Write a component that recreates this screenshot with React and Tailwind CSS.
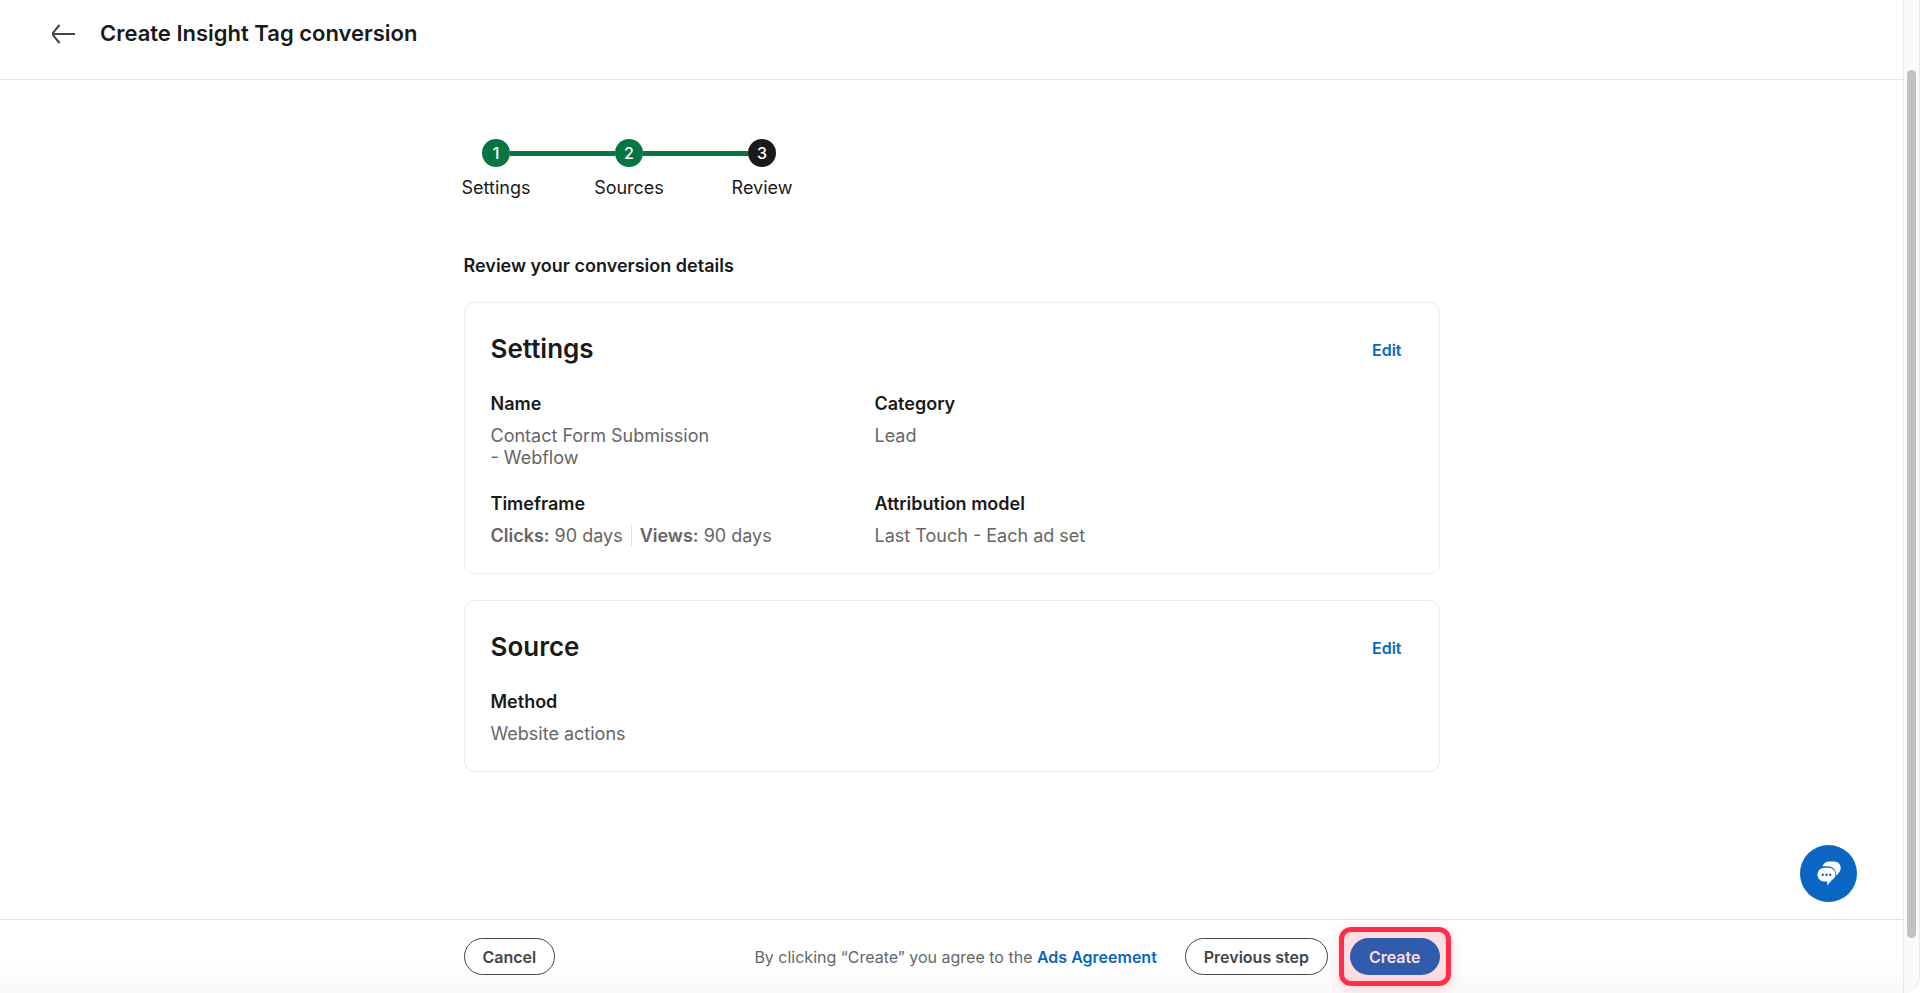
import React from 'react';

const steps = [
    { id: 1, label: 'Settings', done: true },
    { id: 2, label: 'Sources', done: true },
    { id: 3, label: 'Review', done: false },
];

const BackArrow = () => (
    <svg width="24" height="20" viewBox="0 0 24 20" fill="none" stroke="#444" strokeWidth="2">
        <path d="M24 10H1.5M8.5 1L2 8.8V11.2L8.5 19" />
    </svg>
);

const ChatIcon = () => (
    <svg width="24" height="25" viewBox="0 0 24 25">
        <path
            fill="#fff"
            d="M5.4 5.2C6.6 2.2 9.2.5 12.5.5h4.3C20.8.5 23.7 3.3 23.7 7c0 2.2-.9 4.1-2.4 5.3l-.8 1.6h-1.3C19.3 8.7 15.8 5.2 10.8 5.2z"
        />
        <path
            fill="#fff"
            d="M7.6 6.7h4C15.6 6.7 18.5 9.7 18.5 13.3c0 2.7-1.5 4.6-3.8 6L10.2 24.5V20.6H7.6C3.4 20.6.5 17.5.5 13.7S3.4 6.7 7.6 6.7z"
        />
        <g fill="#0a66c2">
            <circle cx="5.7" cy="13.8" r="1.2" />
            <circle cx="9.5" cy="13.8" r="1.2" />
            <circle cx="13.3" cy="13.8" r="1.2" />
        </g>
    </svg>
);

const Stepper = () => (
    <ol className="flex -ml-[34px]">
        {steps.map((step, index) => (
            <li key={step.id} className="w-[133px] flex flex-col items-center gap-2">
                <div className="w-full flex items-center">
                    <span className={`h-[5px] flex-1 ${index > 0 ? 'bg-[#057642]' : ''}`} />
                    <span
                        className={`w-7 h-7 rounded-full flex items-center justify-center text-base font-medium text-white ${step.done ? 'bg-[#057642]' : 'bg-[#1a1a1a]'
                            }`}
                    >
                        {step.id}
                    </span>
                    <span className={`h-[5px] flex-1 ${index < steps.length - 1 ? 'bg-[#057642]' : ''}`} />
                </div>
                <span className="text-lg leading-[26px]">{step.label}</span>
            </li>
        ))}
    </ol>
);

const Card = ({ title, children }) => (
    <section className="border border-[#ebebeb] rounded-[10px] pl-[26px] pr-[37px] pt-7 pb-[26px]">
        <div className="flex items-center justify-between mb-[26px]">
            <h3 className="text-[26px] leading-9 font-semibold">{title}</h3>
            <button type="button" className="pt-0.5 text-base font-semibold text-[#0a66c2]">Edit</button>
        </div>
        <dl className="grid grid-cols-[384px_1fr] gap-y-6">{children}</dl>
    </section>
);

const Field = ({ label, children }) => (
    <div className="text-lg leading-[22px]">
        <dt className="font-semibold mb-[10px]">{label}</dt>
        <dd className="text-[#666] max-w-[300px]">{children}</dd>
    </div>
);

const App = () => {
    return (
        <div className="h-screen flex bg-white text-[#1a1a1a] font-[Inter,sans-serif] overflow-hidden">
            <div className="flex-1 min-w-0 flex flex-col relative">
                {/* Header */}
                <header className="h-20 shrink-0 border-b border-[#e8e8e8] pl-[51px] pb-3 flex items-center gap-[25px]">
                    <button type="button" aria-label="Back">
                        <BackArrow />
                    </button>
                    <h1 className="text-[22px] font-semibold">Create Insight Tag conversion</h1>
                </header>

                {/* Conversion review */}
                <main className="flex-1 min-h-0">
                    <div className="w-full max-w-[976px] mx-auto pt-[59px]">
                        <Stepper />
                        <h2 className="mt-[52px] mb-6 text-lg leading-[25px] font-semibold">
                            Review your conversion details
                        </h2>
                        <div className="flex flex-col gap-[26px]">
                            <Card title="Settings">
                                <Field label="Name">
                                    Contact Form Submission
                                    <br />- Webflow
                                </Field>
                                <Field label="Category">Lead</Field>
                                <Field label="Timeframe">
                                    <span className="border-r border-[#e0e0e0] pr-2 mr-2">
                                        <strong className="font-semibold">Clicks:</strong> 90 days
                                    </span>
                                    <strong className="font-semibold">Views:</strong> 90 days
                                </Field>
                                <Field label="Attribution model">Last Touch - Each ad set</Field>
                            </Card>
                            <Card title="Source">
                                <Field label="Method">Website actions</Field>
                            </Card>
                        </div>
                    </div>
                </main>

                {/* Footer actions */}
                <footer className="shrink-0 border-t border-[#e0e0e0] h-[74px] bg-linear-to-b from-white from-60% to-[#faf8f8]">
                    <div className="w-full max-w-[976px] mx-auto pt-[18px] flex items-center text-base font-semibold">
                        <button type="button" className="h-[37px] px-[18px] rounded-full border border-[#444] text-[#444] bg-white">
                            Cancel
                        </button>
                        <p className="ml-auto mr-7 font-normal text-[#666]">
                            By clicking “Create” you agree to the{' '}
                            <a href="#ads-agreement" className="font-semibold text-[#0a66c2]">Ads Agreement</a>
                        </p>
                        <button type="button" className="h-[37px] px-[18px] mr-[22px] rounded-full border border-[#444] text-[#444] bg-white">
                            Previous step
                        </button>
                        <div className="relative">
                            <button type="button" className="h-[37px] px-[19px] rounded-full bg-[#0a66c2] text-white">
                                Create
                            </button>
                            {/* Highlight ring */}
                            <span className="absolute -inset-[11px] rounded-xl border-[5px] border-[#ff2d49] bg-[#ff2d49]/16 shadow-[0_3px_14px_rgba(255,45,73,0.2)] pointer-events-none" />
                        </div>
                    </div>
                </footer>

                {/* Chat launcher */}
                <button
                    type="button"
                    aria-label="Open chat"
                    className="absolute right-[46px] bottom-[91px] w-[57px] h-[57px] rounded-full bg-[#0a66c2] flex items-center justify-center"
                >
                    <ChatIcon />
                </button>
            </div>

            {/* Scroll track */}
            <div className="w-[17px] shrink-0 bg-[#fafafa] border-x border-[#e8e8e8] rounded-br-2xl pt-[70px] pb-[55px] flex justify-center">
                <div className="w-[9px] rounded-full bg-[#c1c1c1]" />
            </div>
        </div>
    );
};

export default App;
